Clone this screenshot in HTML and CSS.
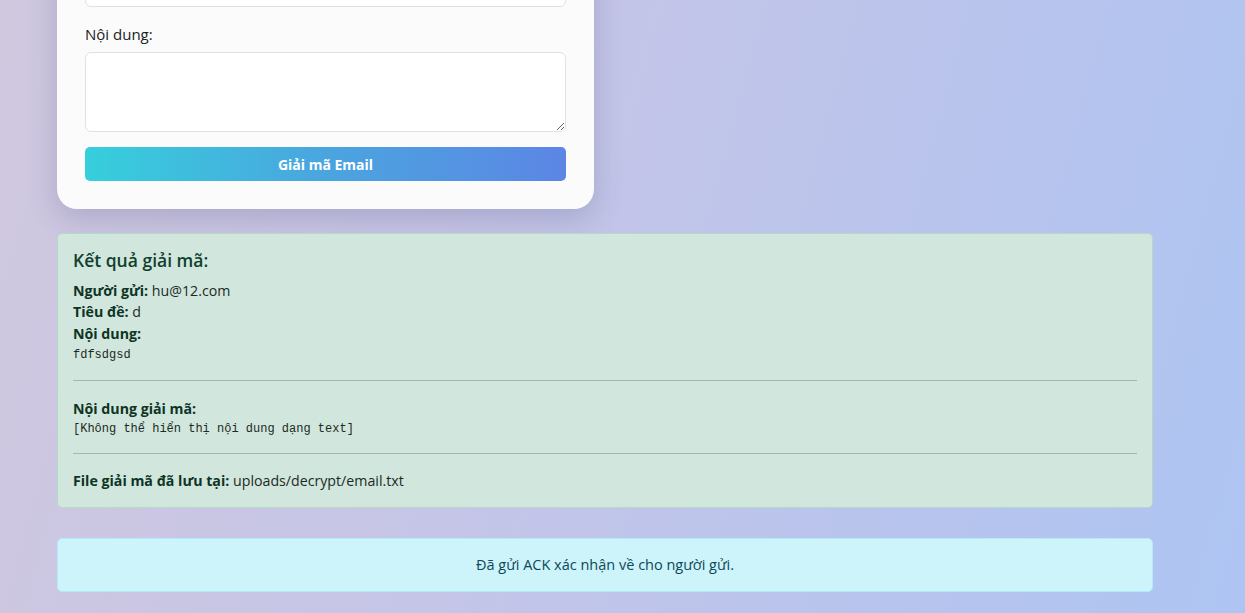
FILE: index.html
```html
<!DOCTYPE html>
<html lang="vi">
<head>
<meta charset="utf-8">
<title>Giải mã Email</title>
<link rel="stylesheet" href="styles.css">
</head>
<body>
<div class="page">
  <div class="row">
    <div class="card">
      <input class="input" type="text" aria-label="Tiêu đề">
      <label class="label">Nội dung:</label>
      <textarea class="textarea"></textarea>
      <button class="btn" type="button">Giải mã Email</button>
    </div>
  </div>

  <div class="result">
    <h4 class="result-title">Kết quả giải mã:</h4>
    <p class="line"><strong>Người gửi:</strong> hu@12.com</p>
    <p class="line"><strong>Tiêu đề:</strong> d</p>
    <p class="line line-gap"><strong>Nội dung:</strong></p>
    <pre class="code">fdfsdgsd</pre>
    <hr class="sep sep-1">
    <p class="line line-head"><strong>Nội dung giải mã:</strong></p>
    <pre class="code code-2">[Không thể hiển thị nội dung dạng text]</pre>
    <hr class="sep sep-2">
    <p class="line"><strong>File giải mã đã lưu tại:</strong> uploads/decrypt/email.txt</p>
  </div>

  <div class="ack">Đã gửi ACK xác nhận về cho người gửi.</div>
</div>
</body>
</html>
```
FILE: styles.css
```css
html, body {
  margin: 0;
  padding: 0;
}
body {
  width: 1245px;
  height: 613px;
  overflow: hidden;
  font-family: "Open Sans", "Noto Sans", sans-serif;
  background: linear-gradient(105deg, #d0c8df 0%, #c5c5e7 40%, #b6c4ee 78%, #aec5f3 100%);
}
.page {
  width: 1096px;
  margin-left: 57px;
  margin-top: -59px;
  display: flex;
  flex-direction: column;
}
.row {
  display: flex;
}
.card {
  width: 537px;
  box-sizing: border-box;
  padding: 28px;
  background: #fbfbfc;
  border-radius: 20px;
  box-shadow: 0 10px 30px rgba(60, 60, 110, 0.22);
  display: flex;
  flex-direction: column;
}
.label {
  font-size: 15px;
  line-height: 24px;
  color: #222;
  margin-bottom: 6px;
}
.input {
  height: 38px;
  box-sizing: border-box;
  border: 1px solid #dee2e6;
  border-radius: 6px;
  background: #fff;
  margin-bottom: 15px;
}
.textarea {
  height: 80px;
  box-sizing: border-box;
  border: 1px solid #dee2e6;
  border-radius: 6px;
  background: #fff;
  resize: vertical;
  margin: 0 0 15px 0;
}
.btn {
  height: 34px;
  border: 0;
  border-radius: 5px;
  background: linear-gradient(90deg, #36cfdc 0%, #4aa5df 50%, #5c86e5 100%);
  color: #fff;
  font-family: "Open Sans", "Noto Sans", sans-serif;
  font-weight: 700;
  font-size: 14px;
}
.result {
  margin-top: 24px;
  border: 1px solid #b7d8c7;
  border-radius: 5px;
  background: #d1e6dd;
  color: #0f3d2a;
  padding: 15px 15px 16px 15px;
  display: flex;
  flex-direction: column;
}
.result-title {
  margin: 0 0 8px 0;
  font-size: 17.5px;
  font-weight: 600;
  line-height: 23px;
  color: #10402c;
}
.line {
  margin: 0;
  font-size: 14.2px;
  line-height: 21px;
  color: #1c2b24;
}
.line strong {
  color: #0d3424;
  font-weight: 700;
}
.line-gap {
  margin-top: 1px;
  line-height: 22px;
}
.line-head {
  line-height: 22px;
}
.code {
  margin: 2px 0 0 0;
  font-family: "Liberation Mono", "DejaVu Sans Mono", monospace;
  font-size: 12px;
  line-height: 16px;
  color: #1c2b24;
}
.code-2 {
  margin-top: 1px;
}
.sep {
  border: 0;
  border-top: 1px solid #a4b8ad;
  height: 0;
  margin: 0;
}
.sep-1 {
  margin: 17px 0 17px 0;
}
.sep-2 {
  margin: 16px 0 16px 0;
}
.ack {
  margin-top: 30px;
  border: 1px solid #b2ecf8;
  border-radius: 5px;
  background: #cdf3fb;
  color: #0b4a59;
  font-size: 14.5px;
  line-height: 22px;
  padding: 15px;
  text-align: center;
}
```
